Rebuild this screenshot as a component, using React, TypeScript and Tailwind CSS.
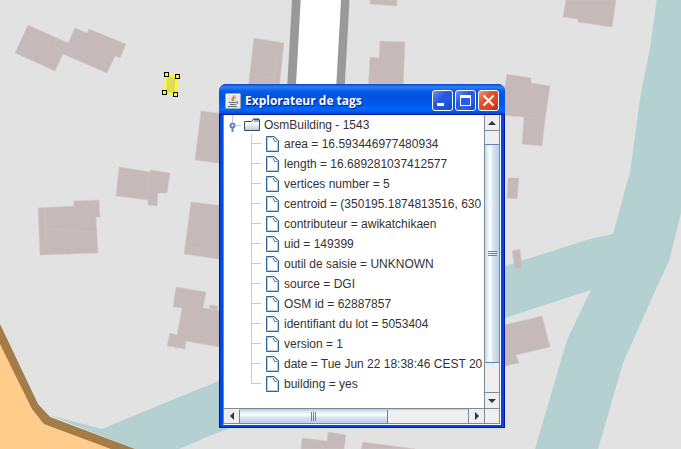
import React from "react";

const tags = [
  "area = 16.593446977480934",
  "length = 16.689281037412577",
  "vertices number = 5",
  "centroid = (350195.1874813516, 630",
  "contributeur = awikatchikaen",
  "uid = 149399",
  "outil de saisie = UNKNOWN",
  "source = DGI",
  "OSM id = 62887857",
  "identifiant du lot = 5053404",
  "version = 1",
  "date = Tue Jun 22 18:38:46 CEST 20",
  "building = yes",
];

const buildings = [
  "28,25 68,43 63,54 55,71 15,53",
  "75,28 87,33 89,29 126,44 120,58 115,56 107,73 63,54 68,43",
  "201,111 225,114 225,164 195,160",
  "119,167 150,172 150,170 170,173 167,193 158,193 157,206 148,205 148,200 116,196",
  "38,208 74,206 74,201 99,200 100,217 96,217 98,253 40,255",
  "191,202 225,206 225,260 184,254",
  "176,287 206,292 203,308 225,311 225,348 186,341 185,349 167,346 170,333 177,335 182,308 173,307",
  "209,308 210,305 218,306 217,310",
  "254,38 284,43 279,90 248,90",
  "370,57 379,58 380,41 405,42 403,90 368,90",
  "370,0 397,0 397,6 370,4",
  "566,0 616,0 612,27 578,22 578,19 563,17",
  "507,74 531,78 531,83 550,86 545,120 542,146 522,144 524,117 500,115",
  "508,178 519,178 517,199 507,198",
  "512,251 520,249 522,268 515,269",
  "500,326 542,316 550,347 516,355 519,363 500,367",
  "302,438 327,441 328,432 346,435 344,449 301,449",
  "363,442 415,449 361,449",
];

function MapView() {
  return (
    <svg
      className="absolute inset-0 h-full w-full"
      viewBox="0 0 681 449"
      preserveAspectRatio="xMinYMin slice"
      aria-hidden="true"
    >
      <rect width="681" height="449" fill="#e2e2e2" />
      <path
        d="M656.7 0L650 48L641 93L633 150L630 172L613 234L590 239L505 266L219 381L167 402L102 429L49 415L135 449H179L207 437L230 428L505 318L560 300L591 290L586 300L567 340L535 449H598L623 363L651 300L669 261L681 213V0Z"
        fill="#b5d0d0"
      />
      <path d="M292 0H349.5L344.5 90H287Z" fill="#999" />
      <path d="M300.7 0H341L336 90H295.7Z" fill="#fff" />
      <g fill="#c5b9b9" stroke="#d4caca" strokeWidth="0.6">
        {buildings.map((points) => (
          <polygon key={points} points={points} />
        ))}
      </g>
      <path
        d="M68 43L56 39L54 46L63 50M18 48L34 54L33 60M86 64L88 59L108 67M119 175L150 172M149 172L148 192H158M45 208L46 247M47 229L96 232M48 247H71V253M185 246L199 248L198 255M176 350L177 340L186 341M249 75L274 78L277 57M524 117L545 120M505 359L516 355M336 441L337 433"
        fill="none"
        stroke="#cbc0c0"
        strokeWidth="0.7"
      />
      <path d="M63 54L68 43" stroke="#c5b9b9" strokeWidth="1.500" />
      <path d="M0 334L32 404L50 420L125 449H0Z" fill="#ffcc8c" />
      <path d="M0 324L38 404L50 417L135 449H111L44 424L32 409L0 344Z" fill="#a47c48" />
      <polygon points="167,75 177,77 175,94 165,93" fill="#dfdb5c" />
      <path
        d="M167 76L165.500 84L165.500 92L175 94M176.500 77L175.500 94M168 75L177 77"
        fill="none"
        stroke="#ff0"
        strokeWidth="2"
      />
      <g fill="#ff0" stroke="#000">
        <rect x="164.500" y="72.500" width="4" height="4" />
        <rect x="175.500" y="74.500" width="4" height="4" />
        <rect x="173.500" y="92.500" width="4" height="4" />
        <rect x="162.500" y="90.500" width="4" height="4" />
      </g>
    </svg>
  );
}

function JavaIcon() {
  return (
    <svg width="16" height="16" viewBox="0 0 16 16" aria-hidden="true">
      <rect x="0.5" y="0.5" width="15" height="15" rx="1" fill="#e6e8e8" stroke="#9aa5ad" />
      <path d="M1 1H15V2H2V14H1Z" fill="#fff" />
      <path d="M9 2C10 4 6 5 7 7L8 8M11 4C8 5 8 6 9 8" fill="none" stroke="#e5842a" strokeWidth="1.3" />
      <path d="M4 9.500H11M5 11.500H10M11 9C14 8 13 11 10.500 11.500M3 13.500H12" fill="none" stroke="#557086" />
    </svg>
  );
}

function FolderIcon() {
  return (
    <svg width="16" height="13" viewBox="0 0 16 13" className="shrink-0" aria-hidden="true">
      <defs>
        <linearGradient id="folder" x2="0" y2="1">
          <stop offset="0.3" stopColor="#fff" />
          <stop offset="1" stopColor="#b3c9de" />
        </linearGradient>
      </defs>
      <path d="M0.500 12.500V3.500H7.500L9.500 1.500H15.500V12.500Z" fill="url(#folder)" stroke="#3d4a58" />
      <path d="M10 0H15V1H9L8 2H7Z" fill="#7b9cc0" />
      <path d="M9.500 1.500H15" stroke="#2f5580" />
      <path d="M10 3H15" stroke="#8fb0d2" strokeWidth="2" />
    </svg>
  );
}

function FileIcon() {
  return (
    <svg width="13" height="16" viewBox="0 0 13 16" className="shrink-0" aria-hidden="true">
      <path d="M0.500 0.500H8L12.500 5V15.500H0.500Z" fill="#fff" stroke="#2f6699" />
      <path d="M1.500 14.500V1.500H7M11.500 6V14.500H1.500" fill="none" stroke="#b4cbe2" />
      <path d="M8 0.500L12.500 5" fill="none" stroke="#2f6699" />
      <path d="M7.500 2V4H8.500V5.500H11" fill="none" stroke="#5f8cb6" />
    </svg>
  );
}

const caption =
  "flex size-[21px] items-center justify-center rounded-[3px] border border-white";

function TitleBar() {
  return (
    <header className="flex h-[30px] items-center gap-1 rounded-t-[7px] bg-[linear-gradient(#0846c8_0px,#2b80f5_3px,#0a5ce8_7px,#0053e1_12px,#0058ea_20px,#0066ff_26px,#0049cf_30px)] pt-[3px] pr-[6px] pl-[6px]">
      <JavaIcon />
      <h1 className="flex-1 truncate font-['Open_Sans','Noto_Sans',sans-serif] text-[12px] font-bold text-white [text-shadow:1px_1px_#0a1883]">
        Explorateur de tags
      </h1>
      <div className="flex gap-[2px]">
        <button aria-label="Minimize" className={`${caption} bg-[linear-gradient(135deg,#6d92f5,#2858e0_40%,#2156dc_70%,#1244c0)]`}>
          <svg width="19" height="19" aria-hidden="true">
            <rect x="4" y="12" width="7" height="3" fill="#fff" />
          </svg>
        </button>
        <button aria-label="Maximize" className={`${caption} bg-[linear-gradient(135deg,#6d92f5,#2858e0_40%,#2860ee_70%,#1244c0)]`}>
          <svg width="19" height="19" aria-hidden="true">
            <path d="M4 4H15V15H4ZM5 7V14H14V7Z" fill="#fff" fillRule="evenodd" />
          </svg>
        </button>
        <button aria-label="Close" className={`${caption} bg-[linear-gradient(135deg,#f0937a,#e0502c_40%,#dd4820_70%,#b32b0c)]`}>
          <svg width="19" height="19" aria-hidden="true">
            <path d="M4.500 4.500L14.500 14.500M14.500 4.500L4.500 14.500" stroke="#fff" strokeWidth="2.200" />
          </svg>
        </button>
      </div>
    </header>
  );
}

function TagTree() {
  return (
    <div role="tree" className="min-w-0 flex-1 overflow-hidden bg-white pb-[14px] whitespace-nowrap">
      <div role="treeitem" aria-expanded="true" className="flex h-[19px] items-center">
        <svg width="20" height="20" className="shrink-0" aria-hidden="true">
          <path d="M8.500 0V7M12 10.500H17" stroke="#b8cde4" />
          <circle cx="8.500" cy="10.500" r="2" fill="#fff" stroke="#6382bf" strokeWidth="2" />
          <path d="M8.500 13V17" stroke="#6382bf" strokeWidth="2" />
        </svg>
        <FolderIcon />
        <span className="pl-1">OsmBuilding - 1543</span>
      </div>
      <div role="group">
        {tags.map((tag, i) => (
          <div role="treeitem" key={tag} className="flex h-[20px] items-center">
            <svg width="42" height="20" className="shrink-0" aria-hidden="true">
              <path
                d={i === tags.length - 1 ? "M27.500 0V9.500H37" : "M27.500 0V20M28 9.500H37"}
                fill="none"
                stroke="#b8cde4"
              />
            </svg>
            <FileIcon />
            <span className="pl-[5px]">{tag}</span>
          </div>
        ))}
      </div>
    </div>
  );
}

const arrow = "flex shrink-0 items-center justify-center bg-[#eee]";

function VerticalScrollbar() {
  return (
    <div className="flex w-[16px] shrink-0 flex-col border-x border-[#7a8a99] bg-[#eee]">
      <button aria-label="Scroll up" className={`${arrow} h-[16px] border-b border-[#7a8a99]`}>
        <svg width="8" height="4" aria-hidden="true">
          <path d="M0 4L4 0L8 4Z" fill="#333" />
        </svg>
      </button>
      <div className="flex-1 pt-[13px] pb-[29px]">
        <div className="flex h-full flex-col items-center justify-center gap-px border-y border-[#6382bf] bg-[linear-gradient(90deg,#c8d9ea,#fff_35%,#d5e3ef_60%,#b8cfe5)]">
          <i className="h-px w-[9px] bg-[#6382bf]" />
          <i className="h-px w-[9px] bg-[#6382bf]" />
          <i className="h-px w-[9px] bg-[#6382bf]" />
        </div>
      </div>
      <button aria-label="Scroll down" className={`${arrow} h-[16px] border-t border-[#7a8a99]`}>
        <svg width="8" height="4" aria-hidden="true">
          <path d="M0 0H8L4 4Z" fill="#333" />
        </svg>
      </button>
    </div>
  );
}

function HorizontalScrollbar() {
  return (
    <div className="flex h-[16px] border-y border-[#7a8a99] bg-[#eee]">
      <button aria-label="Scroll left" className={`${arrow} w-[15px]`}>
        <svg width="4" height="8" aria-hidden="true">
          <path d="M4 0V8L0 4Z" fill="#333" />
        </svg>
      </button>
      <div className="flex-1 border-t border-[#b8cfe5] pr-[80px]">
        <div className="flex h-full items-center justify-center gap-px border-x border-[#6382bf] bg-[linear-gradient(#c8d9ea,#fff_35%,#d5e3ef_60%,#b8cfe5)]">
          <i className="h-[9px] w-px bg-[#6382bf]" />
          <i className="h-[9px] w-px bg-[#6382bf]" />
          <i className="h-[9px] w-px bg-[#6382bf]" />
        </div>
      </div>
      <button aria-label="Scroll right" className={`${arrow} w-[16px] border-l border-[#7a8a99]`}>
        <svg width="4" height="8" aria-hidden="true">
          <path d="M0 0V8L4 4Z" fill="#333" />
        </svg>
      </button>
      <div className="w-[16px] border-x border-[#7a8a99]" />
    </div>
  );
}

export default function App() {
  return (
    <main className="relative min-h-screen overflow-hidden bg-[#e2e2e2]">
      <MapView />
      <section
        aria-label="Explorateur de tags"
        className="absolute top-[84px] left-[219px] w-[286px] rounded-t-[7px] bg-[#0048e0] font-['Liberation_Sans',Arial,sans-serif] text-[12px] leading-[20px] text-[#333]"
      >
        <TitleBar />
        <div className="border-x-4 border-b-[3px] border-[#0048e0] outline outline-[#0018a0] -outline-offset-1">
          <div className="border border-[#7a8a99] border-r-white border-b-white">
            <div className="flex">
              <TagTree />
              <VerticalScrollbar />
            </div>
            <HorizontalScrollbar />
          </div>
        </div>
      </section>
    </main>
  );
}
